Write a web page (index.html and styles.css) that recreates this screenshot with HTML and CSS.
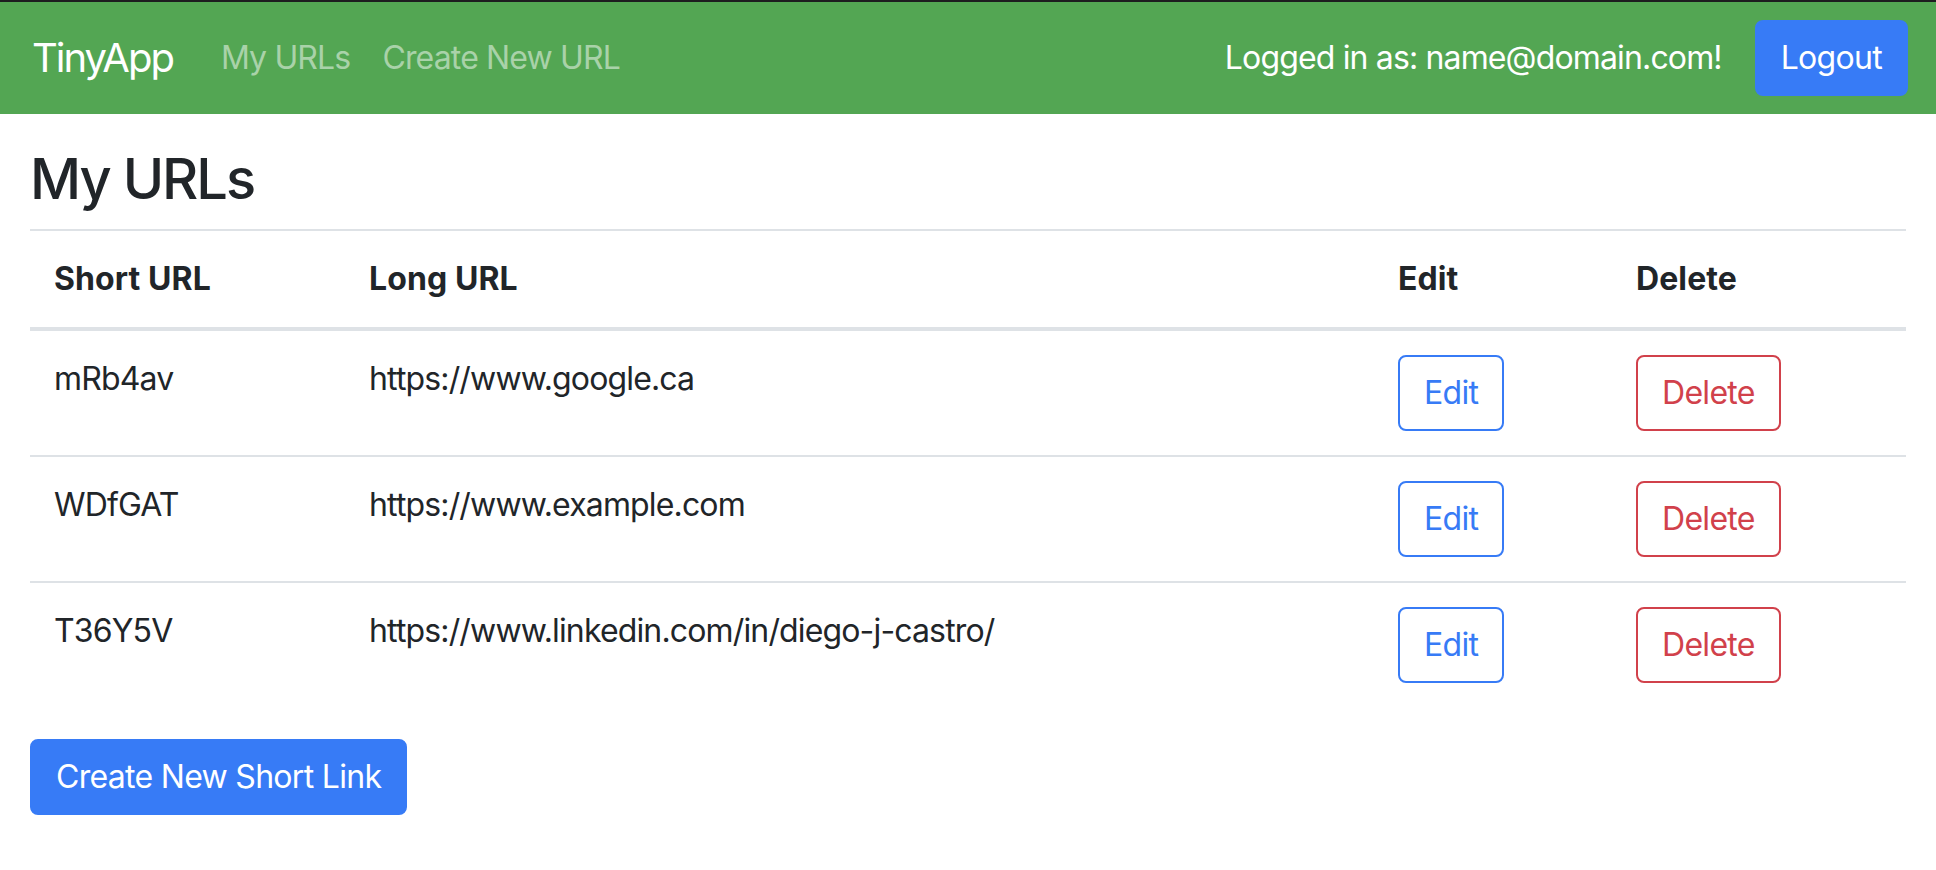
FILE: index.html
```html
<!DOCTYPE html>
<html lang="en">
<head>
<meta charset="utf-8">
<title>TinyApp</title>
<link rel="stylesheet" href="styles.css">
</head>
<body>
<div class="topline"></div>
<nav class="navbar">
  <div class="nav-left">
    <a class="brand" href="#">TinyApp</a>
    <a class="nav-link" href="#">My URLs</a>
    <a class="nav-link" href="#">Create New URL</a>
  </div>
  <div class="nav-right">
    <span class="user">Logged in as: name@domain.com!</span>
    <button class="btn btn-primary">Logout</button>
  </div>
</nav>
<main class="container">
  <h1 class="title">My URLs</h1>
  <table class="table">
    <colgroup>
      <col class="c-short">
      <col class="c-long">
      <col class="c-edit">
      <col class="c-delete">
    </colgroup>
    <thead>
      <tr>
        <th>Short URL</th>
        <th>Long URL</th>
        <th>Edit</th>
        <th>Delete</th>
      </tr>
    </thead>
    <tbody>
      <tr>
        <td>mRb4av</td>
        <td>https://www.google.ca</td>
        <td><button class="btn btn-outline-primary">Edit</button></td>
        <td><button class="btn btn-outline-danger">Delete</button></td>
      </tr>
      <tr>
        <td>WDfGAT</td>
        <td>https://www.example.com</td>
        <td><button class="btn btn-outline-primary">Edit</button></td>
        <td><button class="btn btn-outline-danger">Delete</button></td>
      </tr>
      <tr>
        <td>T36Y5V</td>
        <td>https://www.linkedin.com/in/diego-j-castro/</td>
        <td><button class="btn btn-outline-primary">Edit</button></td>
        <td><button class="btn btn-outline-danger">Delete</button></td>
      </tr>
    </tbody>
  </table>
  <button class="btn btn-primary">Create New Short Link</button>
</main>
</body>
</html>
```

FILE: styles.css
```css
* { box-sizing: border-box; }

html, body {
  margin: 0;
  padding: 0;
  background: #ffffff;
}

body {
  font-family: Inter, "Noto Sans", sans-serif;
  font-size: 32px;
  line-height: 48px;
  color: #212529;
  letter-spacing: -0.85px;
}

.topline {
  height: 2px;
  background: #1d1d1f;
}

.navbar {
  background: #53a653;
  display: flex;
  align-items: center;
  justify-content: space-between;
  padding: 16px 28px 16px 32px;
  height: 112px;
}

.nav-left, .nav-right {
  display: flex;
  align-items: center;
}

.brand {
  font-size: 40px;
  line-height: 60px;
  color: #ffffff;
  text-decoration: none;
  margin-right: 32px;
  letter-spacing: -2px;
}

.nav-link {
  color: #a9d2a9;
  text-decoration: none;
  padding: 8px 16px;
}

.user {
  color: #ffffff;
  margin-right: 33px;
}

.btn {
  font-family: inherit;
  font-size: 32px;
  line-height: 48px;
  letter-spacing: -0.7px;
  padding: 12px 24px;
  border: 2px solid transparent;
  border-radius: 8px;
  background: transparent;
  cursor: pointer;
  display: inline-block;
}

.btn-primary {
  background: #377bf6;
  border-color: #377bf6;
  color: #ffffff;
}

.btn-outline-primary {
  color: #377bf6;
  border-color: #377bf6;
}

.btn-outline-danger {
  color: #d1414b;
  border-color: #d1414b;
}

.container {
  padding: 32px 30px 0 30px;
}

.title {
  font-size: 56px;
  line-height: 67px;
  font-weight: 500;
  margin: 0 0 16px 0;
  letter-spacing: -2px;
}

.table {
  width: 100%;
  border-collapse: collapse;
  margin-bottom: 32px;
  table-layout: fixed;
}

.c-short { width: 315px; }
.c-long { width: auto; }
.c-edit { width: 238px; }
.c-delete { width: 294px; }

.table th,
.table td {
  text-align: left;
  vertical-align: top;
  padding: 24px;
  border-top: 2px solid #dee2e6;
}

.table th {
  font-weight: 700;
  letter-spacing: 0.1px;
}

.table thead th {
  border-bottom: 4px solid #dee2e6;
}

.table tbody td {
  font-weight: 400;
}
```
